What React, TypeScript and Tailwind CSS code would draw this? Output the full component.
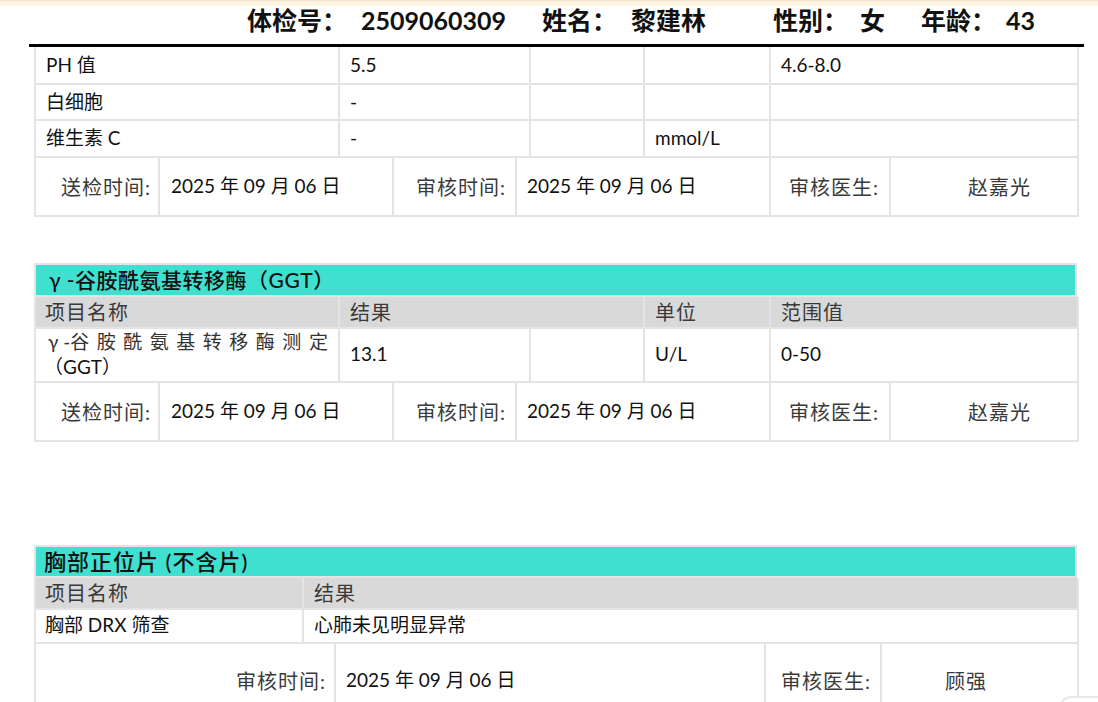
import React from "react";

const sans = { fontFamily: 'Lato, "Noto Sans CJK SC", sans-serif' };

const cell = "border-r-2 border-b-2 border-[#e4e4e4] flex items-center";

function Cell({
  children,
  className = "",
}: {
  children?: React.ReactNode;
  className?: string;
}) {
  return <div className={`${cell} ${className}`}>{children}</div>;
}

function Label({ children }: { children: React.ReactNode }) {
  return <span className="text-[#3a3a3a] text-[20px] tracking-[1px]">{children}</span>;
}

function FooterRow({ doctor }: { doctor: string }) {
  return (
    <div className="grid grid-cols-[124px_234px_123px_254px_120px_188px] h-[59px]">
      <Cell className="justify-end pr-[7px]">
        <Label>送检时间:</Label>
      </Cell>
      <Cell className="pl-[11px]">2025 年 09 月 06 日</Cell>
      <Cell className="justify-end pr-[9px]">
        <Label>审核时间:</Label>
      </Cell>
      <Cell className="pl-[10px]">2025 年 09 月 06 日</Cell>
      <Cell className="justify-end pr-[10px]">
        <Label>审核医生:</Label>
      </Cell>
      <Cell className="pl-[77px]">
        <Label>{doctor}</Label>
      </Cell>
    </div>
  );
}

export default function App() {
  return (
    <div className="relative w-[1098px] h-[702px] overflow-hidden bg-white text-[19px] text-[#111]" style={sans}>
      {/* top strip */}
      <div className="h-[6px] bg-[#fdf4e3] border-t border-[#f3e6cc]" />

      {/* patient header */}
      <div className="h-[38px] flex items-end pl-[247px] text-[25px] font-bold leading-none pb-[11px]">
        <span>体检号：</span>
        <span className="ml-[14px]">2509060309</span>
        <span className="ml-[36px]">姓名：</span>
        <span className="ml-[14px]">黎建林</span>
        <span className="ml-[67px]">性别：</span>
        <span className="ml-[12px]">女</span>
        <span className="ml-[36px]">年龄：</span>
        <span className="ml-[10px]">43</span>
      </div>
      <div className="ml-[29px] w-[1055px] h-[3px] bg-black" />

      {/* section 1 (continued) */}
      <div className="ml-[34px] w-[1043px] border-l-2 border-[#e4e4e4]">
        <div className="grid grid-cols-[304px_191px_114px_126px_308px] h-[38px]">
          <Cell className="pl-[10px]">PH 值</Cell>
          <Cell className="pl-[10px]">5.5</Cell>
          <Cell />
          <Cell />
          <Cell className="pl-[10px]">4.6-8.0</Cell>
        </div>
        <div className="grid grid-cols-[304px_191px_114px_126px_308px] h-[36px]">
          <Cell className="pl-[10px]">白细胞</Cell>
          <Cell className="pl-[10px]">-</Cell>
          <Cell />
          <Cell />
          <Cell />
        </div>
        <div className="grid grid-cols-[304px_191px_114px_126px_308px] h-[37px]">
          <Cell className="pl-[10px]">维生素 C</Cell>
          <Cell className="pl-[10px]">-</Cell>
          <Cell />
          <Cell className="pl-[10px]">mmol/L</Cell>
          <Cell />
        </div>
        <FooterRow doctor="赵嘉光" />
      </div>

      {/* section 2 */}
      <div className="ml-[34px] mt-[46px] w-[1043px] border-l-2 border-t-2 border-[#e4e4e4]">
        <div className="h-[32px] bg-[#40e0d0] border-r-2 border-b-2 border-[#e4e4e4] flex items-center pl-[13px] text-[21px] font-medium tracking-[0.5px]">
          γ -谷胺酰氨基转移酶（GGT）
        </div>
        <div className="grid grid-cols-[304px_305px_126px_308px] h-[30px] bg-[#d9d9d9]">
          <Cell className="pl-[9px]">
            <Label>项目名称</Label>
          </Cell>
          <Cell className="pl-[10px]">
            <Label>结果</Label>
          </Cell>
          <Cell className="pl-[10px]">
            <Label>单位</Label>
          </Cell>
          <Cell className="pl-[10px]">
            <Label>范围值</Label>
          </Cell>
        </div>
        <div className="grid grid-cols-[304px_191px_114px_126px_308px] h-[56px]">
          <div className="border-r-2 border-b-2 border-[#e4e4e4] pl-[12px] pr-[10px] flex flex-col justify-center leading-[25px]">
            <div className="flex justify-between text-[#333]">
              {["γ -谷", "胺", "酰", "氨", "基", "转", "移", "酶", "测", "定"].map((c) => (
                <span key={c}>{c}</span>
              ))}
            </div>
            <div className="-ml-[4px]">（GGT）</div>
          </div>
          <Cell className="pl-[10px]">13.1</Cell>
          <Cell />
          <Cell className="pl-[10px]">U/L</Cell>
          <Cell className="pl-[10px]">0-50</Cell>
        </div>
        <FooterRow doctor="赵嘉光" />
      </div>

      {/* section 3 */}
      <div className="ml-[34px] mt-[103px] w-[1043px] border-l-2 border-t-2 border-[#e4e4e4]">
        <div className="h-[31px] bg-[#40e0d0] border-r-2 border-b-2 border-[#e4e4e4] flex items-center pl-[8px] text-[22px] font-medium tracking-[1px]">
          胸部正位片 (不含片)
        </div>
        <div className="grid grid-cols-[268px_775px] h-[31px] bg-[#d9d9d9]">
          <Cell className="pl-[9px]">
            <Label>项目名称</Label>
          </Cell>
          <Cell className="pl-[10px]">
            <Label>结果</Label>
          </Cell>
        </div>
        <div className="grid grid-cols-[268px_775px] h-[35px]">
          <Cell className="pl-[9px]">胸部 DRX 筛查</Cell>
          <Cell className="pl-[10px]">心肺未见明显异常</Cell>
        </div>
        <div className="grid grid-cols-[300px_430px_116px_197px] h-[80px]">
          <Cell className="justify-end pr-[8px] items-start pt-[22px]">
            <Label>审核时间:</Label>
          </Cell>
          <Cell className="pl-[10px] items-start pt-[22px]">2025 年 09 月 06 日</Cell>
          <Cell className="justify-end pr-[9px] items-start pt-[22px]">
            <Label>审核医生:</Label>
          </Cell>
          <Cell className="pl-[63px] items-start pt-[22px]">
            <Label>顾强</Label>
          </Cell>
        </div>
      </div>

      {/* floating corner */}
      <div className="absolute right-[-20px] bottom-[-30px] w-[60px] h-[36px] rounded-tl-[14px] border-2 border-[#e8e8e8] bg-white" />
    </div>
  );
}
